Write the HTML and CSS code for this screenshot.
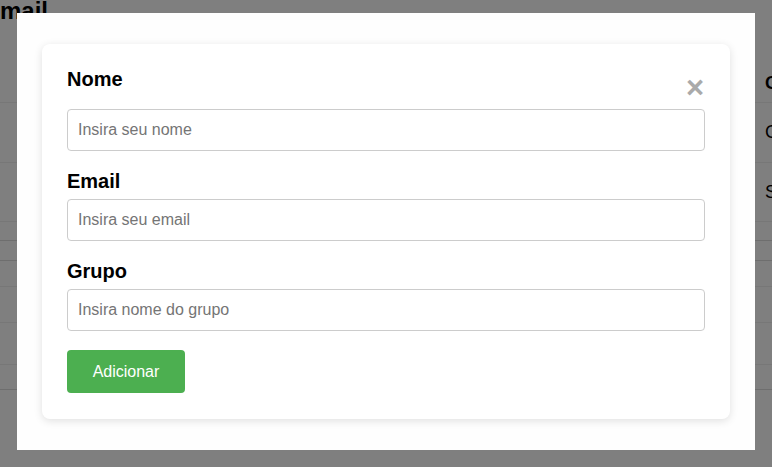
FILE: index.html
```html
<!DOCTYPE html>
<html lang="pt">
<head>
<meta charset="utf-8">
<title>Email</title>
<link rel="stylesheet" href="styles.css">
</head>
<body>
<div class="page">
  <h1 class="title">mail</h1>
  <div class="table">
    <div class="row head"><span class="cell">C</span></div>
    <div class="row r1"><span class="cell">C</span></div>
    <div class="row r2"><span class="cell">S</span></div>
    <div class="gap g1"></div>
    <div class="gap g2 dark"></div>
    <div class="gap g3 dark"></div>
    <div class="gap g4"></div>
    <div class="gap g5"></div>
    <div class="gap g6"></div>
    <div class="gap g7 dark"></div>
  </div>
</div>

<div class="overlay">
  <div class="modal">
    <div class="card">
      <div class="card-head">
        <label class="label first" for="nome">Nome</label>
        <span class="close">&times;</span>
      </div>
      <input id="nome" class="field" type="text" placeholder="Insira seu nome">
      <label class="label" for="email">Email</label>
      <input id="email" class="field" type="text" placeholder="Insira seu email">
      <label class="label" for="grupo">Grupo</label>
      <input id="grupo" class="field" type="text" placeholder="Insira nome do grupo">
      <button class="btn" type="button">Adicionar</button>
    </div>
  </div>
</div>
</body>
</html>
```
FILE: styles.css
```css
html, body {
  margin: 0;
  padding: 0;
  height: 100%;
  overflow: hidden;
  background: #fff;
  font-family: "Liberation Sans", Arial, sans-serif;
}

.page {
  width: 900px;
}

.title {
  margin: -3px 0 0 0;
  font-size: 24px;
  line-height: 28px;
  font-weight: bold;
  color: #000;
}

.row {
  box-sizing: border-box;
  border-bottom: 1px solid #eee;
  font-size: 18px;
  color: #000;
  display: flex;
  align-items: center;
}

.cell {
  margin-left: 765px;
}

.head {
  height: 78px;
  font-weight: bold;
  align-items: flex-end;
  padding-bottom: 8px;
}

.r1 { height: 60px; }
.r2 { height: 59px; }

.gap {
  box-sizing: border-box;
  border-bottom: 1px solid #eee;
}

.gap.dark { border-bottom-color: #ddd; }

.g1 { height: 18px; border-bottom: none; }
.g2 { height: 0; }
.g3 { height: 20px; }
.g4 { height: 26px; }
.g5 { height: 36px; }
.g6 { height: 42px; }
.g7 { height: 25px; }

.overlay {
  position: fixed;
  inset: 0;
  background: rgba(0, 0, 0, 0.5);
  display: flex;
  justify-content: center;
  align-items: flex-start;
  padding-top: 13px;
  box-sizing: border-box;
}

.modal {
  width: 738px;
  box-sizing: border-box;
  background: #fefefe;
  padding: 31px 25px;
}

.card {
  background: #fff;
  border-radius: 8px;
  box-shadow: 0 2px 8px rgba(0, 0, 0, 0.12);
  padding: 24px 25px 26px;
}

.card-head {
  display: flex;
  justify-content: space-between;
  align-items: flex-start;
  height: 34px;
  margin-bottom: 7px;
}

.label {
  display: block;
  font-size: 20px;
  line-height: 23px;
  font-weight: bold;
  color: #000;
  margin-bottom: 6px;
}

.label.first {
  margin-bottom: 0;
}

.close {
  font-size: 31px;
  line-height: 30px;
  font-weight: bold;
  color: #aaa;
  margin-top: 5px;
  margin-right: 1px;
}

.field {
  display: block;
  width: 100%;
  box-sizing: border-box;
  height: 42px;
  margin: 0 0 19px;
  padding: 0 10px;
  border: 1px solid #ccc;
  border-radius: 4px;
  font-family: "Liberation Sans", Arial, sans-serif;
  font-size: 16px;
  color: #000;
  background: #fff;
}

.field::placeholder {
  color: #757575;
}

.btn {
  display: block;
  width: 118px;
  height: 43px;
  border: none;
  border-radius: 4px;
  background: #4caf50;
  color: #fff;
  font-family: "Liberation Sans", Arial, sans-serif;
  font-size: 16px;
  padding: 0;
}
```
